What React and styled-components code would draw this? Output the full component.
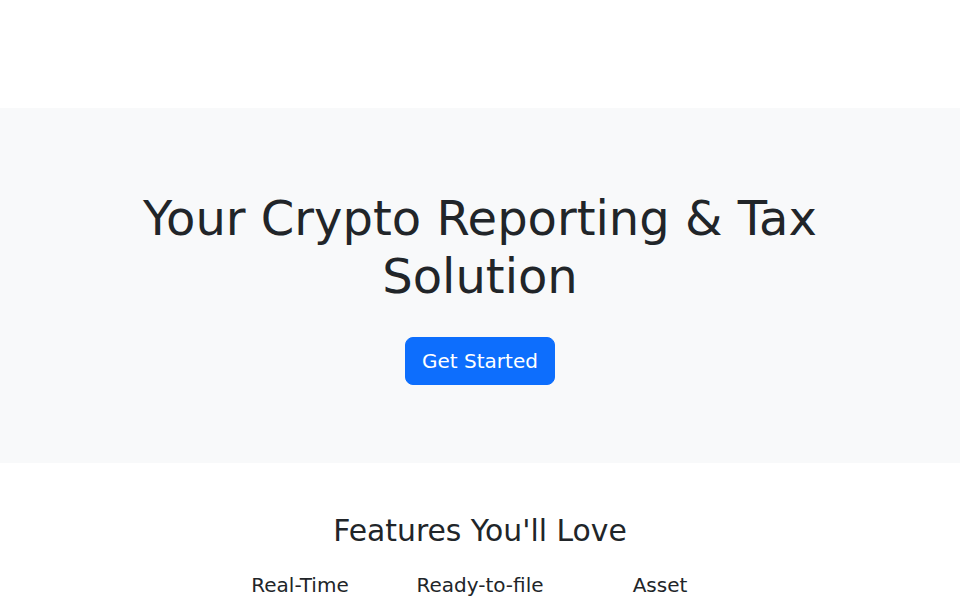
import React from "react";
import styled, { createGlobalStyle } from "styled-components";

const Global = createGlobalStyle`
  * { box-sizing: border-box; }
  html, body { margin: 0; padding: 0; }
  body {
    font-family: "DejaVu Sans", sans-serif;
    color: #212529;
    background: #ffffff;
    -webkit-font-smoothing: antialiased;
  }
`;

const TopBar = styled.header`
  height: 108px;
  background: #ffffff;
`;

const Hero = styled.section`
  background: #f8f9fa;
  padding: 82px 0 78px;
  text-align: center;
`;

const Container = styled.div`
  max-width: 720px;
  margin: 0 auto;
  padding: 0 12px;
`;

const HeroTitle = styled.h1`
  font-size: 48px;
  font-weight: 400;
  line-height: 1.2;
  margin: 0 0 32px;
`;

const PrimaryButton = styled.a`
  display: inline-block;
  background: #0d6efd;
  color: #ffffff;
  border: 1px solid #0d6efd;
  border-radius: 8px;
  padding: 8px 16px;
  font-size: 20px;
  line-height: 1.5;
  text-decoration: none;
  cursor: pointer;
`;

const Features = styled.section`
  padding: 50px 0 48px;
  text-align: center;
`;

const SectionTitle = styled.h2`
  font-size: 29.84px;
  font-weight: 400;
  line-height: 1.2;
  margin: 0 0 24px;
`;

const FeatureRow = styled.div`
  display: flex;
  justify-content: center;
  flex-wrap: wrap;
`;

const FeatureCol = styled.div`
  width: 180px;
  padding: 0 12px;
`;

const FeatureTitle = styled.h5`
  font-size: 20px;
  font-weight: 400;
  line-height: 1.2;
  margin: 0 0 8px;
`;

const FeatureText = styled.p`
  font-size: 16px;
  line-height: 1.5;
  margin: 0;
`;

const features = [
  { title: "Real-Time Tracking", text: "Monitor your portfolio across exchanges and wallets." },
  { title: "Ready-to-file Reports", text: "Generate tax forms in minutes." },
  { title: "Asset Management", text: "Keep every asset organised in one place." },
];

export default function App() {
  return (
    <>
      <Global />
      <TopBar />
      <Hero>
        <Container>
          <HeroTitle>Your Crypto Reporting &amp; Tax Solution</HeroTitle>
          <PrimaryButton>Get Started</PrimaryButton>
        </Container>
      </Hero>
      <Features>
        <Container>
          <SectionTitle>Features You'll Love</SectionTitle>
          <FeatureRow>
            {features.map((f) => (
              <FeatureCol key={f.title}>
                <FeatureTitle>{f.title}</FeatureTitle>
                <FeatureText>{f.text}</FeatureText>
              </FeatureCol>
            ))}
          </FeatureRow>
        </Container>
      </Features>
    </>
  );
}
